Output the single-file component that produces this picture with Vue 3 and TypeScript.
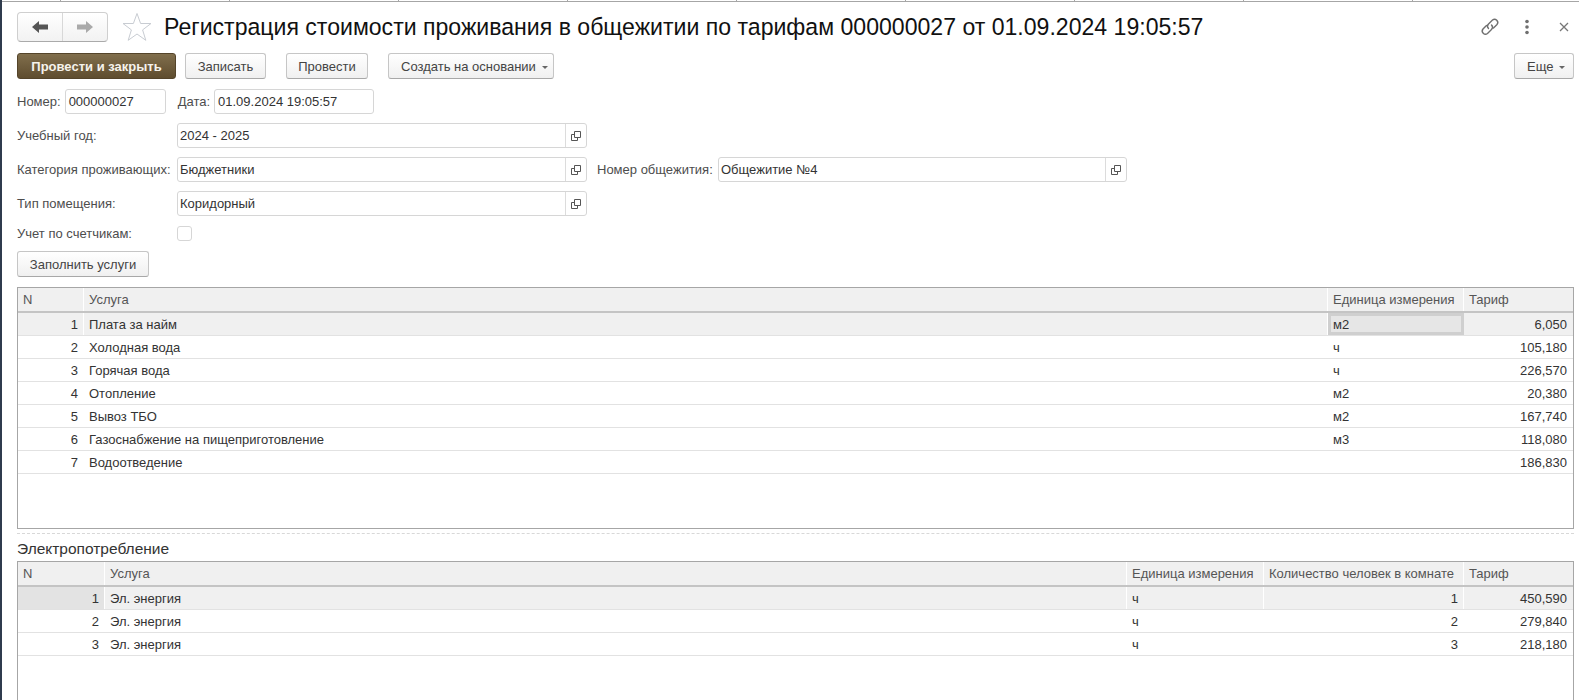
<script setup lang="ts">
interface TariffRow {
  n: number
  name: string
  unit: string
  tariff: string
}

interface PowerRow extends TariffRow {
  people: number
}

const tariffs: TariffRow[] = [
  { n: 1, name: 'Плата за найм', unit: 'м2', tariff: '6,050' },
  { n: 2, name: 'Холодная вода', unit: 'ч', tariff: '105,180' },
  { n: 3, name: 'Горячая вода', unit: 'ч', tariff: '226,570' },
  { n: 4, name: 'Отопление', unit: 'м2', tariff: '20,380' },
  { n: 5, name: 'Вывоз ТБО', unit: 'м2', tariff: '167,740' },
  { n: 6, name: 'Газоснабжение на пищеприготовление', unit: 'м3', tariff: '118,080' },
  { n: 7, name: 'Водоотведение', unit: '', tariff: '186,830' },
]

const power: PowerRow[] = [
  { n: 1, name: 'Эл. энергия', unit: 'ч', people: 1, tariff: '450,590' },
  { n: 2, name: 'Эл. энергия', unit: 'ч', people: 2, tariff: '279,840' },
  { n: 3, name: 'Эл. энергия', unit: 'ч', people: 3, tariff: '218,180' },
]
</script>

<template>
  <div class="page">
    <div class="tabs-edge"></div>

    <header class="head">
      <div class="nav">
        <button class="nav-btn">
          <svg width="18" height="14" viewBox="0 0 18 14"><path d="M1 7l7-6v3.500h9v5H8V13z" fill="#555" /></svg>
        </button>
        <button class="nav-btn">
          <svg width="18" height="14" viewBox="0 0 18 14"><path d="M17 7l-7-6v3.500H1v5h9V13z" fill="#aaa" /></svg>
        </button>
      </div>
      <svg class="star" width="30" height="30" viewBox="0 0 30 30">
        <path d="M15 1.500l3.600 10h10.400l-8.400 6.400 3.200 10.400L15 22l-8.800 6.300 3.200-10.400L1 11.500h10.400z" fill="#fff" stroke="#c8ccd2" stroke-width="1" />
      </svg>
      <h1 class="title">Регистрация стоимости проживания в общежитии по тарифам 000000027 от 01.09.2024 19:05:57</h1>
      <div class="head-tools">
        <svg width="22" height="22" viewBox="0 0 22 22" fill="none" stroke="#6f6f6f" stroke-width="1.400" stroke-linecap="round">
          <path d="M7.500 9.500L4 13a3.200 3.200 0 0 0 4.500 4.500l4-4a3.200 3.200 0 0 0 0-4.500" />
          <path d="M9.500 12.500a3.200 3.200 0 0 1 0-4.500l4-4A3.200 3.200 0 0 1 18 8.500l-3.500 3.500" />
        </svg>
        <svg class="kebab" width="6" height="16" viewBox="0 0 6 16" fill="#6f6f6f">
          <circle cx="3" cy="2.500" r="1.800" />
          <circle cx="3" cy="8" r="1.800" />
          <circle cx="3" cy="13.500" r="1.800" />
        </svg>
        <svg class="close" width="10" height="10" viewBox="0 0 10 10" stroke="#777" stroke-width="1.300">
          <path d="M1 1l8 8M9 1l-8 8" />
        </svg>
      </div>
    </header>

    <div class="toolbar">
      <button class="btn primary">Провести и закрыть</button>
      <button class="btn save">Записать</button>
      <button class="btn post">Провести</button>
      <button class="btn create">Создать на основании<i class="caret"></i></button>
      <button class="btn more">Еще<i class="caret"></i></button>
    </div>

    <div class="row number-row">
      <label class="lbl">Номер:</label>
      <div class="field number">000000027</div>
      <label class="lbl date-lbl">Дата:</label>
      <div class="field date">01.09.2024 19:05:57</div>
    </div>

    <div class="row year-row">
      <label class="lbl wide">Учебный год:</label>
      <div class="field pick">
        <span class="value">2024 - 2025</span>
        <span class="open"><svg width="10" height="10" viewBox="0 0 10 10" fill="none" stroke="#555"><path d="M3.500 .5h6v6h-6zM3.500 3.500H.5v6h6V6.500" /></svg></span>
      </div>
    </div>

    <div class="row cat-row">
      <label class="lbl wide">Категория проживающих:</label>
      <div class="field pick">
        <span class="value">Бюджетники</span>
        <span class="open"><svg width="10" height="10" viewBox="0 0 10 10" fill="none" stroke="#555"><path d="M3.500 .5h6v6h-6zM3.500 3.500H.5v6h6V6.500" /></svg></span>
      </div>
      <label class="lbl dorm-lbl">Номер общежития:</label>
      <div class="field pick dorm">
        <span class="value">Общежитие №4</span>
        <span class="open"><svg width="10" height="10" viewBox="0 0 10 10" fill="none" stroke="#555"><path d="M3.500 .5h6v6h-6zM3.500 3.500H.5v6h6V6.500" /></svg></span>
      </div>
    </div>

    <div class="row type-row">
      <label class="lbl wide">Тип помещения:</label>
      <div class="field pick">
        <span class="value">Коридорный</span>
        <span class="open"><svg width="10" height="10" viewBox="0 0 10 10" fill="none" stroke="#555"><path d="M3.500 .5h6v6h-6zM3.500 3.500H.5v6h6V6.500" /></svg></span>
      </div>
    </div>

    <div class="row check-row">
      <label class="lbl wide">Учет по счетчикам:</label>
      <span class="check"></span>
    </div>

    <button class="btn fill">Заполнить услуги</button>

    <section class="table tariffs">
      <div class="tr th">
        <div class="c">N</div>
        <div class="c">Услуга</div>
        <div class="c">Единица измерения</div>
        <div class="c">Тариф</div>
      </div>
      <div v-for="row in tariffs" :key="row.n" class="tr" :class="{ current: row.n === 1 }">
        <div class="c num">{{ row.n }}</div>
        <div class="c">{{ row.name }}</div>
        <div class="c" :class="{ selected: row.n === 1 }">{{ row.unit }}</div>
        <div class="c num">{{ row.tariff }}</div>
      </div>
    </section>

    <div class="splitter"></div>
    <h2 class="group">Электропотребление</h2>

    <section class="table power">
      <div class="tr th">
        <div class="c">N</div>
        <div class="c">Услуга</div>
        <div class="c">Единица измерения</div>
        <div class="c">Количество человек в комнате</div>
        <div class="c">Тариф</div>
      </div>
      <div v-for="row in power" :key="row.n" class="tr" :class="{ current: row.n === 1 }">
        <div class="c num" :class="{ marker: row.n === 1 }">{{ row.n }}</div>
        <div class="c">{{ row.name }}</div>
        <div class="c">{{ row.unit }}</div>
        <div class="c num">{{ row.people }}</div>
        <div class="c num">{{ row.tariff }}</div>
      </div>
    </section>
  </div>
</template>

<style>
html,
body {
  margin: 0;
  background: #fff;
  overflow: hidden;
}
</style>

<style scoped>
.page {
  box-sizing: border-box;
  height: 700px;
  overflow: hidden;
  padding: 0 5px 0 15px;
  border-left: 2px solid #2f3b4d;
  font-family: "Liberation Sans", Arial, sans-serif;
  font-size: 13px;
  color: #333;
}

/* tab bar bottom edge, the separators poke through above the line */
.tabs-edge {
  box-sizing: border-box;
  height: 2px;
  margin: 0 -5px 0 -15px;
  border-bottom: 1px solid #a6a6a6;
  background: linear-gradient(90deg, #a6a6a6 1px, #fff 1px) 58px 0 / 169px 100%;
}

/* header */
.head {
  display: flex;
  align-items: center;
  height: 30px;
  margin-top: 10px;
}

.nav {
  display: flex;
  width: 91px;
  height: 30px;
  box-sizing: border-box;
  border: 1px solid #cfcfcf;
  border-bottom-color: #aaa;
  border-radius: 4px;
  background: linear-gradient(#fff, #f2f2f2);
}

.nav-btn {
  flex: 1;
  display: flex;
  align-items: center;
  justify-content: center;
  padding: 0;
  border: 0;
  background: none;
}

.nav-btn + .nav-btn {
  border-left: 1px solid #d8d8d8;
}

.star {
  margin-left: 14px;
}

.title {
  margin: 0 0 0 12px;
  font-size: 23.080px;
  font-weight: 400;
  white-space: nowrap;
  color: #111;
}

.head-tools {
  display: flex;
  align-items: center;
  margin-left: auto;
}

.kebab {
  margin-left: 23px;
}

.close {
  margin: 0 5px 0 29px;
}

/* buttons */
.toolbar {
  display: flex;
  margin-top: 11px;
}

.btn {
  box-sizing: border-box;
  height: 26px;
  padding: 0;
  border: 1px solid #c6c6c6;
  border-bottom-color: #a8a8a8;
  border-radius: 3px;
  background: linear-gradient(#fff, #f0f0f0);
  font: inherit;
  color: #444;
  white-space: nowrap;
}

.primary {
  width: 159px;
  border-color: #54442a;
  background: linear-gradient(#806e4c, #5f4d2f);
  color: #f6f3ec;
  font-weight: 700;
}

.save {
  width: 81px;
  margin-left: 9px;
}

.post {
  width: 82px;
  margin-left: 20px;
}

.create {
  width: 166px;
  margin-left: 20px;
  padding-left: 12px;
  text-align: left;
}

.more {
  width: 60px;
  margin-left: auto;
  padding-left: 12px;
  text-align: left;
}

.caret {
  display: inline-block;
  margin-left: 6px;
  vertical-align: middle;
  border: 3px solid transparent;
  border-top-color: #666;
  border-bottom-width: 0;
}

.fill {
  display: block;
  width: 132px;
  margin-top: 10px;
}

/* form */
.row {
  display: flex;
  align-items: center;
}

.number-row {
  height: 25px;
  margin-top: 10px;
}

.year-row {
  height: 25px;
  margin-top: 9px;
}

.cat-row,
.type-row {
  height: 25px;
  margin-top: 9px;
}

.check-row {
  height: 16px;
  margin-top: 9px;
}

.lbl {
  color: #4d4d4d;
  white-space: nowrap;
}

.wide {
  width: 160px;
}

.date-lbl {
  margin-left: 12px;
}

.dorm-lbl {
  margin-left: 10px;
  width: 121px;
}

.field {
  box-sizing: border-box;
  height: 25px;
  border: 1px solid #d6d6d6;
  border-radius: 3px;
  background: #fff;
  color: #333;
}

.number,
.date {
  display: flex;
  align-items: center;
  padding-left: 3px;
}

.number {
  width: 101px;
  margin-left: 4px;
}

.date {
  width: 160px;
  margin-left: 4px;
}

.pick {
  display: flex;
  width: 410px;
}

.pick.dorm {
  width: 409px;
}

.value {
  flex: 1;
  display: flex;
  align-items: center;
  padding-left: 2px;
}

.open {
  display: flex;
  align-items: center;
  justify-content: center;
  width: 20px;
  border-left: 1px solid #dcdcdc;
}

.check {
  box-sizing: border-box;
  width: 15px;
  height: 15px;
  border: 1px solid #d6d6d6;
  border-radius: 3px;
}

/* tables */
.table {
  box-sizing: border-box;
  margin-top: 10px;
  border: 1px solid #a6a6a6;
}

.tariffs {
  height: 242px;
}

.power {
  height: 160px;
  margin-top: 3px;
  border-bottom: 0;
}

.tr {
  display: grid;
  height: 23px;
  box-sizing: border-box;
  border-bottom: 1px solid #e2e2e2;
}

.tariffs .tr {
  grid-template-columns: 66px 1244px 136px 1fr;
}

.power .tr {
  grid-template-columns: 87px 1022px 137px 200px 1fr;
}

.tr.th {
  height: 25px;
  border-bottom: 2px solid #c4c4c4;
  background: #f0f0f0;
  color: #555;
}

.tr.current {
  background: #f0f0f0;
}

.c {
  display: flex;
  align-items: center;
  min-width: 0;
  padding: 0 5px;
  white-space: nowrap;
  overflow: hidden;
}

.th .c,
.current .c {
  box-shadow: inset -1px 0 0 #fff;
}

.c:last-child {
  box-shadow: none;
}

.num {
  justify-content: flex-end;
  padding-right: 6px;
}

.current .marker {
  background: #e3e3e3;
}

.current .selected {
  background: #e6e6e6;
  box-shadow: inset 0 0 0 3px #cfcfcf;
}

/* splitter + group title */
.splitter {
  margin-top: 4px;
  border-top: 1px dashed #d8d8d8;
}

.group {
  margin: 6px 0 0;
  font-size: 15.500px;
  line-height: 18px;
  font-weight: 400;
  color: #333;
}
</style>
